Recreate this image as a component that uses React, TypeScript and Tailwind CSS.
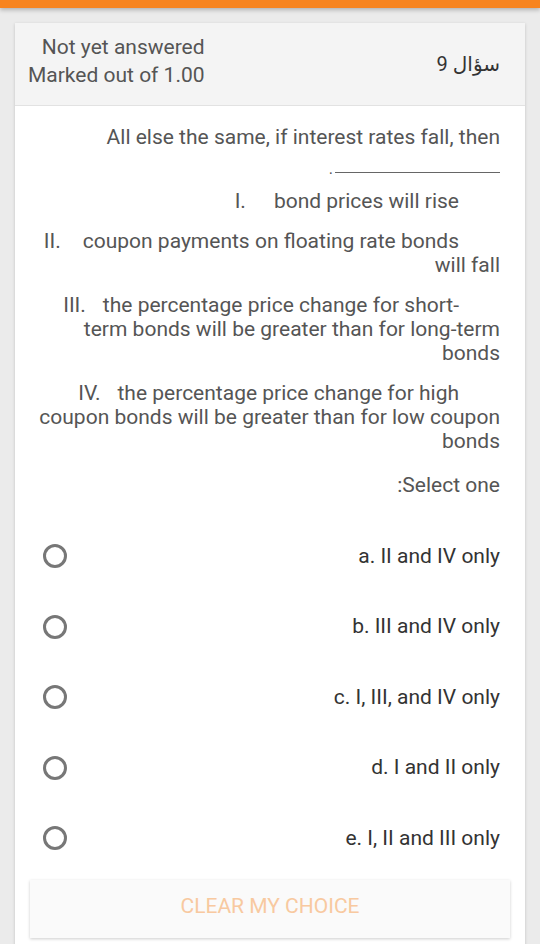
import React from "react";

const items = [
  { m: "I.", gap: "w-[28px]", lines: ["bond prices will rise"] },
  { m: "II.", gap: "w-[22px]", lines: ["coupon payments on floating rate bonds", "will fall"] },
  {
    m: "III.",
    gap: "w-[17px]",
    lines: ["the percentage price change for short-", "term bonds will be greater than for long-term", "bonds"],
  },
  {
    m: "IV.",
    gap: "w-[17px]",
    lines: ["the percentage price change for high", "coupon bonds will be greater than for low coupon", "bonds"],
  },
];

const options = ["a. II and IV only", "b. III and IV only", "c. I, III, and IV only", "d. I and II only", "e. I, II and III only"];

export default function App() {
  return (
    <div
      className="min-h-screen bg-[#ebebeb] overflow-hidden"
      style={{ fontFamily: "Roboto, 'DejaVu Sans', 'Noto Sans', sans-serif" }}
    >
      <div className="h-[8px] bg-[#f7841f] shadow-[0_2px_4px_rgba(0,0,0,0.25)]" />
      <div className="mx-[15px] mt-[15px] bg-white shadow-[0_1px_3px_rgba(0,0,0,0.18)]">
        <div className="flex justify-between items-center h-[83px] bg-[#f4f4f4] border-b border-[#e2e2e2] pl-[13px] pr-[25px]">
          <div className="text-right text-[21px] leading-[28px] text-[#555] pb-[7px]">
            <div>Not yet answered</div>
            <div>Marked out of 1.00</div>
          </div>
          <div dir="rtl" className="text-[20px] text-[#333]">
            سؤال 9
          </div>
        </div>
        <div className="pl-[20px] pr-[25px] pt-[19px] text-[21px] leading-[24px] text-[#555]">
          <div className="text-right">All else the same, if interest rates fall, then</div>
          <div className="mt-[9px] h-[24px] flex justify-end items-center">
            <span className="leading-[24px] mr-[2px] mt-[-2px] text-[16px]">.</span>
            <span className="w-[165px] h-[1px] bg-[#666] mt-[4px]" />
          </div>
          <div className="mt-[7px] flex flex-col gap-[16px]">
            {items.map((it) => (
              <div key={it.m}>
                {it.lines.map((l, i) => (
                  <div key={i} className={i === 0 ? "text-right pr-[41px] whitespace-nowrap" : "text-right whitespace-nowrap"}>
                    {i === 0 && (
                      <>
                        <span>{it.m}</span>
                        <span className={`inline-block ${it.gap}`} />
                      </>
                    )}
                    {l}
                  </div>
                ))}
              </div>
            ))}
          </div>
          <div className="mt-[20px] text-right">:Select one</div>
        </div>
        <div className="mt-[24px] pl-[28px] pr-[25px]">
          {options.map((o) => (
            <div key={o} className="h-[70.5px] flex items-center justify-between">
              <span className="w-[24px] h-[24px] rounded-full border-[3px] border-[#777] box-border" />
              <span className="text-[21px] text-[#333]">{o}</span>
            </div>
          ))}
        </div>
        <div className="px-[15px] pt-[6px] pb-[20px]">
          <div className="h-[58px] flex items-center justify-center bg-[#fafafa] shadow-[0_1px_3px_rgba(0,0,0,0.2)] text-[21px] uppercase text-[#f8c9a0] pb-[3px]">
            Clear my choice
          </div>
        </div>
      </div>
    </div>
  );
}
